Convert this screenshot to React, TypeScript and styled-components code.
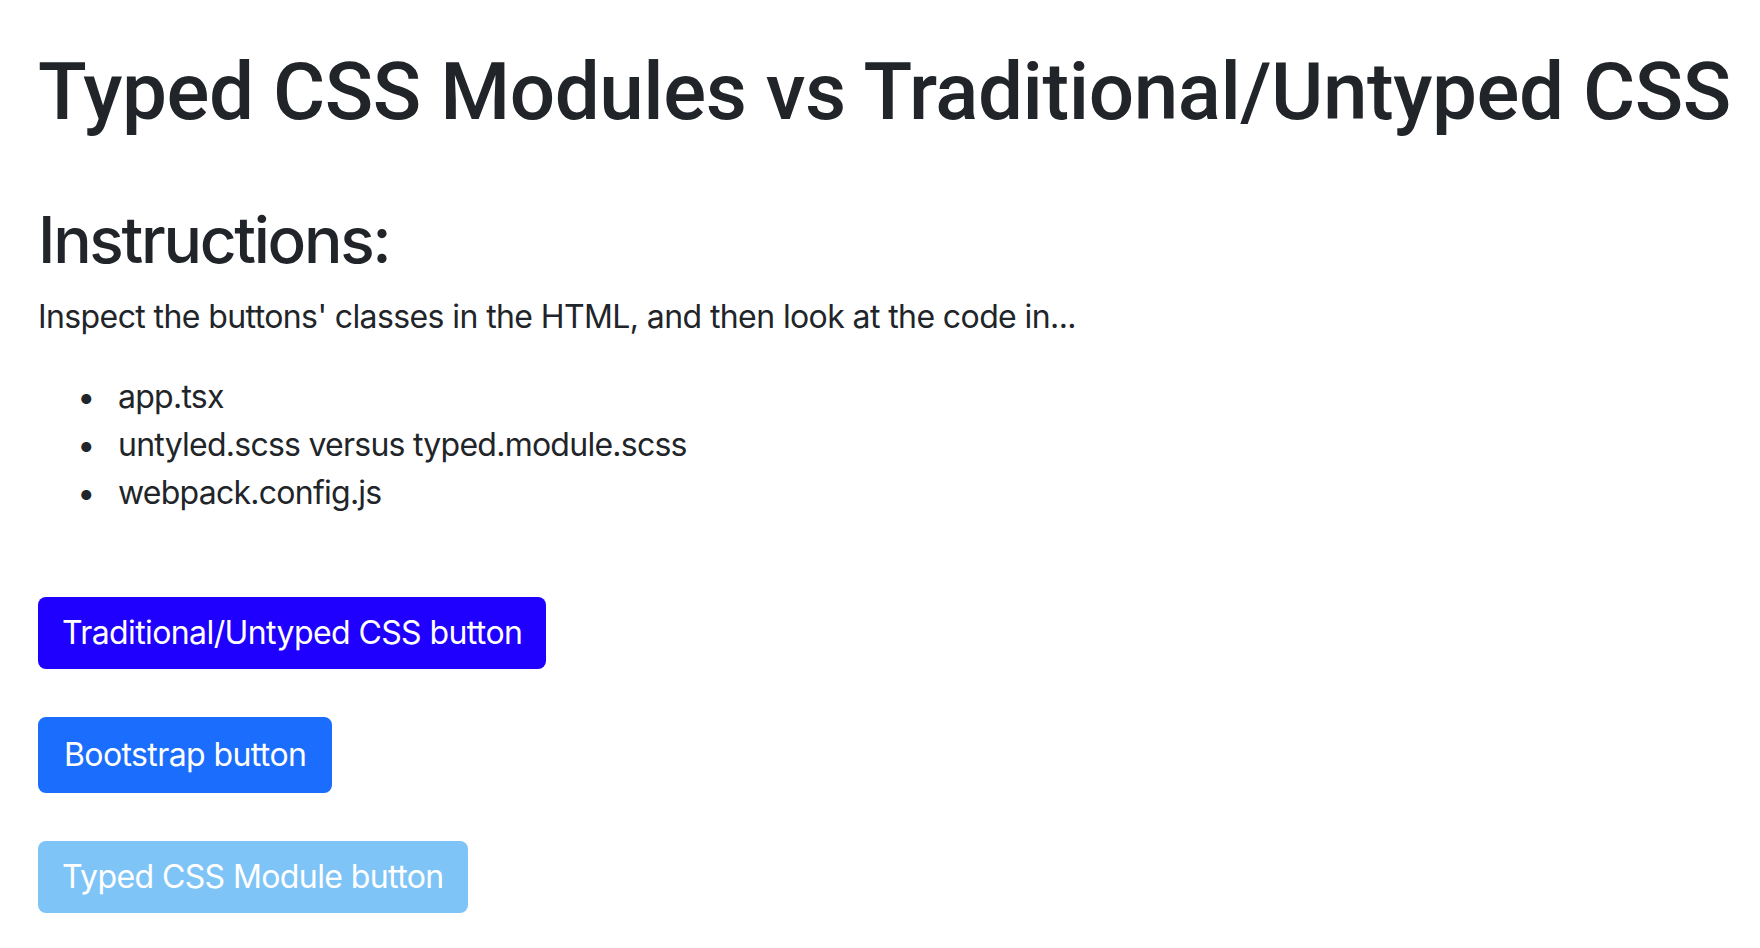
import React from "react";
import styled, { createGlobalStyle } from "styled-components";

const GlobalStyle = createGlobalStyle`
  html, body {
    margin: 0;
    padding: 0;
    background: #ffffff;
  }

  body {
    font-family: Inter, "Noto Sans", sans-serif;
    font-size: 32px;
    line-height: 1.5;
    letter-spacing: -0.6px;
    color: #212529;
  }
`;

const Page = styled.main`
  padding: 44px 38px 0 38px;
`;

const Title = styled.h1`
  margin: 0 0 62px 0;
  font-family: Roboto, "Liberation Sans", Arial, sans-serif;
  font-size: 80px;
  font-weight: 500;
  line-height: 1.2;
  letter-spacing: -0.45px;
  white-space: nowrap;
`;

const SubTitle = styled.h2`
  margin: 0 0 14px 0;
  font-size: 64px;
  font-weight: 500;
  line-height: 1.2;
  letter-spacing: -2.3px;
`;

const Text = styled.p`
  margin: 0 0 32px 0;
`;

const FileList = styled.ul`
  margin: 0 0 80px 0;
  padding-left: 80px;
  line-height: 48px;
  letter-spacing: -0.75px;

  li::marker {
    content: "\u2022\u00a0\u00a0\u00a0";
  }
`;

const Buttons = styled.div`
  display: flex;
  flex-direction: column;
  align-items: flex-start;
  gap: 48px;
`;

const Button = styled.button<{ $bg: string; $bordered?: boolean }>`
  display: inline-block;
  margin: 0;
  padding: 12px 24px;
  border: ${(p) => (p.$bordered ? `2px solid ${p.$bg}` : "none")};
  border-radius: 8px;
  background: ${(p) => p.$bg};
  color: #ffffff;
  font-family: Inter, "Noto Sans", sans-serif;
  font-size: 32px;
  line-height: 48px;
  letter-spacing: -0.6px;
  cursor: pointer;
`;

export default function App() {
  return (
    <>
      <GlobalStyle />
      <Page>
        <Title>Typed CSS Modules vs Traditional/Untyped CSS</Title>
        <SubTitle>Instructions:</SubTitle>
        <Text>
          Inspect the buttons' classes in the HTML, and then look at the code in...
        </Text>
        <FileList>
          <li>app.tsx</li>
          <li>untyled.scss versus typed.module.scss</li>
          <li>webpack.config.js</li>
        </FileList>
        <Buttons>
          <Button $bg="#1f00ff">Traditional/Untyped CSS button</Button>
          <Button $bg="#1b6efd" $bordered>
            Bootstrap button
          </Button>
          <Button $bg="#7fc4f7">Typed CSS Module button</Button>
        </Buttons>
      </Page>
    </>
  );
}
